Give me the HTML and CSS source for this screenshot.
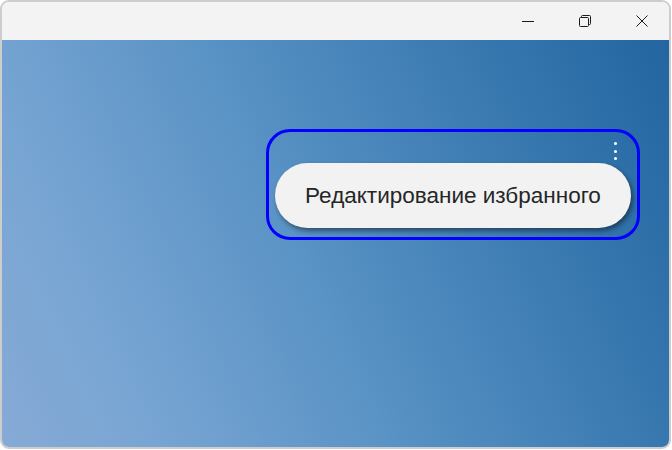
FILE: index.html
```html
<!DOCTYPE html>
<html lang="ru">
<head>
<meta charset="utf-8">
<title>Редактирование избранного</title>
<link rel="stylesheet" href="styles.css">
</head>
<body>
<div class="window">
  <div class="titlebar">
    <svg class="cap-icon" width="12" height="12" viewBox="0 0 12 12"><path d="M0 6.5H12" stroke="#1a1a1a" stroke-width="1" fill="none"/></svg>
    <svg class="cap-icon" width="12" height="12" viewBox="0 0 12 12"><rect x="0.5" y="2.5" width="9" height="9" rx="1" stroke="#1a1a1a" fill="none"/><path d="M2.5 2.5V1.5a1 1 0 0 1 1-1h7a1 1 0 0 1 1 1v7a1 1 0 0 1-1 1h-1" stroke="#1a1a1a" fill="none"/></svg>
    <svg class="cap-icon" width="12" height="12" viewBox="0 0 12 12"><path d="M0.5 0.5L11.5 11.5M11.5 0.5L0.5 11.5" stroke="#1a1a1a" stroke-width="1" fill="none"/></svg>
  </div>
  <div class="content">
    <div class="frame">
      <div class="dots-row">
        <div class="dots"><span></span><span></span><span></span></div>
      </div>
      <div class="pill">Редактирование избранного</div>
    </div>
  </div>
</div>
</body>
</html>
```
FILE: styles.css
```css
html, body {
  margin: 0;
  padding: 0;
  background: #ffffff;
}
.window {
  box-sizing: border-box;
  width: 671px;
  height: 449px;
  border: 2px solid #cdcdcd;
  border-radius: 9px;
  overflow: hidden;
  display: flex;
  flex-direction: column;
}
.titlebar {
  height: 38px;
  flex: none;
  background: #f3f3f3;
  display: flex;
  justify-content: flex-end;
  align-items: center;
  gap: 45px;
  padding-right: 21px;
}
.cap-icon {
  display: block;
}
.content {
  flex: 1;
  background: linear-gradient(65deg, #87aad6 0%, #78a5d3 18%, #5a93c5 45%, #3a7ab1 75%, #2265a0 100%);
  display: flex;
  justify-content: flex-end;
  align-items: flex-start;
  padding-top: 89px;
  padding-right: 29px;
}
.frame {
  box-sizing: border-box;
  width: 374px;
  height: 111px;
  border: 3px solid #0000ff;
  border-radius: 24px;
  padding: 0 6px;
  display: flex;
  flex-direction: column;
}
.dots-row {
  display: flex;
  justify-content: flex-end;
  margin-top: 10px;
  height: 18px;
  padding-right: 14px;
}
.dots {
  display: flex;
  flex-direction: column;
  justify-content: space-between;
  width: 3px;
  height: 18px;
}
.dots span {
  display: block;
  width: 3px;
  height: 3px;
  border-radius: 50%;
  background: #ffffff;
}
.pill {
  margin-top: 3px;
  height: 65px;
  border-radius: 33px;
  background: #f2f2f2;
  box-shadow: 2px 3px 5px rgba(0, 0, 0, 0.45);
  display: flex;
  align-items: center;
  justify-content: center;
  font-family: "Liberation Sans", Arial, sans-serif;
  font-size: 22.5px;
  color: #262626;
}
```
